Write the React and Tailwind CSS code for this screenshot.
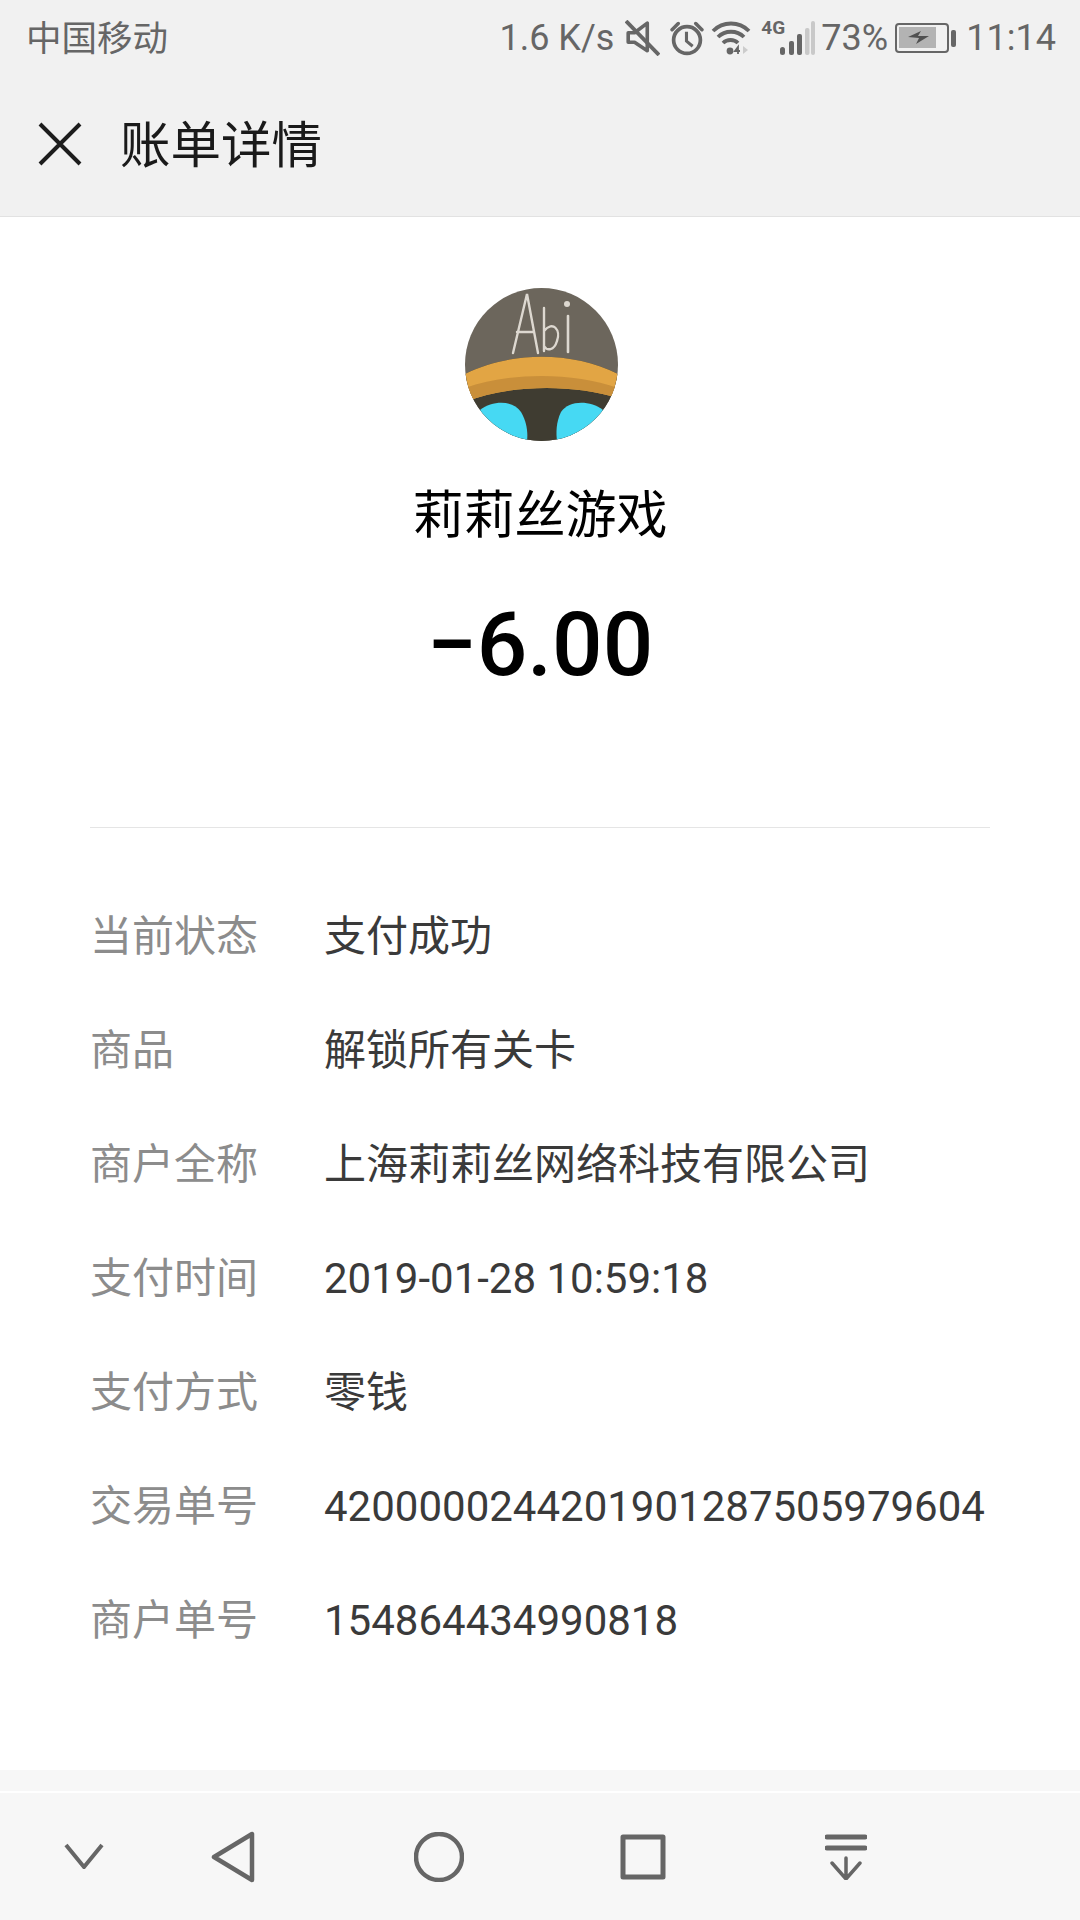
const CJK = 'Roboto, "Noto Sans CJK SC", sans-serif';

function Mute() {
  return (
    <svg width="35" height="36" viewBox="0 0 33 34" fill="none" stroke="#666" strokeWidth="3.4">
      <path d="M3 12h6l12-9v26l-12-8H3z" strokeLinejoin="round" />
      <path d="M1 1l31 32" strokeWidth="3.6" />
    </svg>
  );
}
function Alarm() {
  return (
    <svg width="34" height="36" viewBox="0 0 33 34" fill="none" stroke="#666" strokeWidth="3.6">
      <circle cx="16.5" cy="19" r="13" />
      <path d="M16 11v9l6 5" strokeWidth="3" />
      <path d="M2 9l6-6M31 9l-6-6" strokeWidth="3.4" strokeLinecap="round" />
    </svg>
  );
}
function Wifi() {
  return (
    <svg width="40" height="34" viewBox="0 0 40 34" fill="none" stroke="#666" strokeWidth="3.8">
      <path d="M2 10c10-10 26-10 36 0" />
      <path d="M7 16c7-7 19-7 26 0" />
      <path d="M12 22c4-4 11-4 15 0" />
      <circle cx="19" cy="30" r="3.4" fill="#666" stroke="none" />
      <path d="M27 33v-7l-3 4h5" strokeWidth="1.8" />
      <path d="M32 33v-8l5 4z" fill="#ccc" stroke="none" />
    </svg>
  );
}
function Signal() {
  return (
    <svg width="36" height="34" viewBox="0 0 36 34">
      <rect x="1" y="26" width="5" height="8" rx="2.5" fill="#666" />
      <rect x="10" y="20" width="5" height="14" rx="2" fill="#666" />
      <rect x="18" y="13" width="5" height="21" rx="2" fill="#666" />
      <rect x="26" y="7" width="4.5" height="27" rx="2" fill="#c9c9c9" />
      <rect x="32" y="0" width="4" height="34" rx="2" fill="#c9c9c9" />
    </svg>
  );
}
function Battery() {
  return (
    <svg width="61" height="30" viewBox="0 0 61 30">
      <rect x="1" y="1" width="52" height="28" rx="3" fill="none" stroke="#666" strokeWidth="2" />
      <rect x="4" y="4" width="37" height="21" fill="#b3b3b3" />
      <path d="M13 14l13-6-3 5h11l-13 8 3-6z" fill="#505050" />
      <rect x="56" y="7" width="5" height="17" rx="2" fill="#666" />
    </svg>
  );
}
function Avatar() {
  return (
    <svg width="153" height="153" viewBox="0 0 153 153" className="block">
      <defs>
        <clipPath id="av"><circle cx="76.5" cy="76.5" r="76.5" /></clipPath>
      </defs>
      <g clipPath="url(#av)">
        <rect width="153" height="153" fill="#6c665c" />
        <path d="M0 86C45 63 108 63 153 86V153H0z" fill="#3f3c31" />
        <path d="M0 86C45 63 108 63 153 86V110C108 96 45 96 0 114z" fill="#e2a544" />
        <path d="M0 100C45 84 108 84 153 100V110C108 96 45 96 0 114z" fill="#c98f3a" />
        <path d="M15 122C28 112 48 112 56 124C62 134 63 145 62 153H15z" fill="#46d9f3" />
        <path d="M138 122C125 112 104 112 96 124C91 134 91 145 92 153H138z" fill="#46d9f3" />
        <g fill="none" stroke="#ddd8d0" strokeLinecap="round">
          <path d="M48 65L62 6L73 65M52 44H68" strokeWidth="2.4" />
          <path d="M79 20V63M79 43C88 32 96 42 92 53C89 63 82 63 79 58" strokeWidth="2.4" />
          <path d="M103 28V64" strokeWidth="2.6" />
        </g>
        <circle cx="102" cy="16" r="3" fill="#ddd8d0" />
      </g>
    </svg>
  );
}

const rows = [
  ['当前状态', '支付成功'],
  ['商品', '解锁所有关卡'],
  ['商户全称', '上海莉莉丝网络科技有限公司'],
  ['支付时间', '2019-01-28 10:59:18'],
  ['支付方式', '零钱'],
  ['交易单号', '4200000244201901287505979604'],
  ['商户单号', '154864434990818'],
];

export default function App() {
  return (
    <div className="w-[1080px] h-[1920px] bg-white flex flex-col overflow-hidden" style={{ fontFamily: CJK }}>
      <div className="h-[217px] shrink-0 bg-[#f1f1f1] border-b border-[#e2e2e2] flex flex-col">
        <div className="h-[75px] flex items-center justify-between pl-[26px] pr-[24px] text-[#666]">
          <span className="text-[35.5px] leading-none pt-[5px]">中国移动</span>
          <div className="flex items-center text-[36px] leading-none">
            <span className="text-[36px] mr-[11px]">1.6 K/s</span>
            <Mute />
            <span className="w-[10px]" />
            <Alarm />
            <span className="w-[7px]" />
            <Wifi />
            <span className="w-[10px]" />
            <div className="relative w-[54px] h-[34px]">
              <span className="absolute left-0 top-[-3px] text-[19px] font-bold leading-[20px]">4G</span>
              <div className="absolute left-[18px] top-0"><Signal /></div>
            </div>
            <span className="ml-[6px] w-[68px] text-[36px]">73%</span>
            <span className="w-[6px]" />
            <Battery />
            <span className="ml-[10px] text-[36px]">11:14</span>
          </div>
        </div>
        <div className="flex-1 flex items-center pb-[3px]">
          <svg width="44" height="44" viewBox="0 0 44 44" className="ml-[38px]" fill="none" stroke="#1d1d1d" strokeWidth="4">
            <path d="M2 2L42 42M42 2L2 42" />
          </svg>
          <span className="ml-[38px] text-[50.5px] leading-none text-[#1a1a1a] pt-[5px]">账单详情</span>
        </div>
      </div>

      <div className="flex-1 flex flex-col items-center pt-[71px]">
        <div className="ml-[3px]"><Avatar /></div>
        <div className="mt-[40px] text-[51px] leading-[70px] text-black">莉莉丝游戏</div>
        <div className="mt-[41px] text-[89px] leading-[106px] font-medium text-black">−6.00</div>
        <div className="mt-[129px] w-[900px] h-px bg-[#e5e5e5]" />
        <div className="mt-[53px] w-[900px] flex flex-col">
          {rows.map(([k, v]) => (
            <div key={k} className="h-[114px] flex items-center text-[42px] pb-[3px]">
              <span className="w-[234px] shrink-0 text-[#8c8c8c]">{k}</span>
              <span className="text-[#3a3a3a] whitespace-nowrap">{v}</span>
            </div>
          ))}
        </div>
      </div>

      <div className="h-[21px] shrink-0 bg-[#f7f7f7]" />
      <div className="h-[2px] shrink-0 bg-white" />
      <div className="h-[127px] shrink-0 bg-[#f7f7f7] flex items-center">
        <svg width="40" height="26" viewBox="0 0 40 26" className="ml-[64px] mb-[2px]" fill="none" stroke="#666" strokeWidth="4">
          <path d="M2 2L20 24L38 2" />
        </svg>
        <svg width="44" height="52" viewBox="0 0 44 52" className="ml-[107px]" fill="none" stroke="#666" strokeWidth="4.5" strokeLinejoin="round">
          <path d="M41 3V49L3 26z" />
        </svg>
        <svg width="50" height="50" viewBox="0 0 50 50" className="ml-[159px]" fill="none" stroke="#666" strokeWidth="4.5">
          <circle cx="25" cy="25" r="23" />
        </svg>
        <svg width="46" height="46" viewBox="0 0 46 46" className="ml-[156px]" fill="none" stroke="#666" strokeWidth="5" strokeLinejoin="round">
          <rect x="3" y="3" width="40" height="40" />
        </svg>
        <svg width="42" height="46" viewBox="0 0 42 46" className="ml-[159px]" fill="none" stroke="#666" strokeWidth="4" strokeLinecap="round">
          <path d="M2 3H40M2 14H40" strokeWidth="5" />
          <path d="M21 24V44M7 29L21 45L35 29" strokeWidth="3.5" />
        </svg>
      </div>
    </div>
  );
}
